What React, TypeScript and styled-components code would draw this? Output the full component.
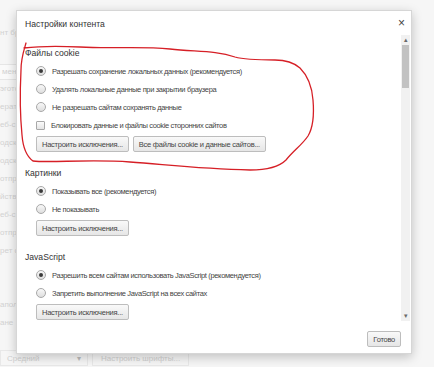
import React from "react";
import styled, { createGlobalStyle } from "styled-components";

const GlobalStyle = createGlobalStyle`
  html, body {
    margin: 0;
    padding: 0;
    width: 434px;
    height: 367px;
    overflow: hidden;
    background: #f6f6f6;
    font-family: "Liberation Sans", Arial, sans-serif;
  }
`;

interface SectionData {
  title: string;
  options: { label: string; kind: "radio" | "check"; checked?: boolean }[];
  buttons: string[];
}

const sections: SectionData[] = [
  {
    title: "Файлы cookie",
    options: [
      { label: "Разрешать сохранение локальных данных (рекомендуется)", kind: "radio", checked: true },
      { label: "Удалять локальные данные при закрытии браузера", kind: "radio" },
      { label: "Не разрешать сайтам сохранять данные", kind: "radio" },
      { label: "Блокировать данные и файлы cookie сторонних сайтов", kind: "check" },
    ],
    buttons: ["Настроить исключения...", "Все файлы cookie и данные сайтов..."],
  },
  {
    title: "Картинки",
    options: [
      { label: "Показывать все (рекомендуется)", kind: "radio", checked: true },
      { label: "Не показывать", kind: "radio" },
    ],
    buttons: ["Настроить исключения..."],
  },
  {
    title: "JavaScript",
    options: [
      { label: "Разрешить всем сайтам использовать JavaScript (рекомендуется)", kind: "radio", checked: true },
      { label: "Запретить выполнение JavaScript на всех сайтах", kind: "radio" },
    ],
    buttons: ["Настроить исключения..."],
  },
];

// фон страницы настроек за диалогом
const backLines = [
  "нт бр",
  "",
  "мента...",
  "эгото",
  "ерати",
  "еб-с",
  "одск",
  "одск",
  "отпр",
  "йств",
  "еб-с",
  "отпр",
  "рет с",
  "",
  "",
  "апол",
  "ане",
];

const App: React.FC = () => {
  return (
    <>
      <GlobalStyle />
      <Page>
        <BackColumn>
          {backLines.map((t, i) => (
            <BackLine key={i} $boxed={i === 2}>
              {t}
            </BackLine>
          ))}
        </BackColumn>
        <BackBottom>
          <BackSelect>
            Средний
            <span>▾</span>
          </BackSelect>
          <BackButton>Настроить шрифты...</BackButton>
        </BackBottom>

        <Dialog>
          <Header>
            <Title>Настройки контента</Title>
            <Close>×</Close>
          </Header>
          <Body>
            <Content>
              {sections.map((s) => (
                <Section key={s.title}>
                  <Heading>{s.title}</Heading>
                  {s.options.map((o) => (
                    <OptionRow key={o.label}>
                      {o.kind === "radio" ? (
                        <Radio $checked={!!o.checked} />
                      ) : (
                        <CheckBox />
                      )}
                      <span>{o.label}</span>
                    </OptionRow>
                  ))}
                  <ButtonRow>
                    {s.buttons.map((b) => (
                      <Button key={b}>{b}</Button>
                    ))}
                  </ButtonRow>
                </Section>
              ))}
            </Content>
            <ScrollBar>
              <Arrow>▴</Arrow>
              <Thumb />
              <Track />
              <Arrow>▾</Arrow>
            </ScrollBar>
          </Body>
          <Footer>
            <Button>Готово</Button>
          </Footer>
        </Dialog>

        <Scribble viewBox="0 0 434 367" width="434" height="367">
          <path
            d="M26 43 C 24 50, 21 58, 21 70 C 20 90, 20 115, 22 135 C 23 148, 26 156, 33 161 C 50 163, 90 159, 130 162 C 170 165, 200 169, 250 170 C 268 170, 280 166, 286 160 C 294 150, 302 145, 308 136 C 314 126, 314 112, 313 100 C 312 86, 308 76, 300 68 C 292 61, 282 60, 275 60 C 258 60, 245 60, 235 57 C 215 50, 195 52, 170 49 C 140 46, 110 49, 80 47 C 60 46, 40 46, 24 48"
            fill="none"
            stroke="#d61f26"
            strokeWidth="1.3"
            strokeLinecap="round"
          />
        </Scribble>
      </Page>
    </>
  );
};

export default App;

const Page = styled.div`
  position: relative;
  width: 434px;
  height: 367px;
  overflow: hidden;
  background: #f6f6f6;
`;

const BackColumn = styled.div`
  display: flex;
  flex-direction: column;
  padding-top: 26px;
  width: 40px;
`;

const BackLine = styled.div<{ $boxed: boolean }>`
  height: 18px;
  line-height: 13px;
  font-size: 8px;
  color: #d2d2d2;
  white-space: nowrap;
  ${(p) =>
    p.$boxed &&
    `
    border: 1px solid #e6e6e6;
    border-left: none;
    background: #fafafa;
    height: 14px;
    margin: 2px 0;
    padding-left: 2px;
  `}
`;

const BackBottom = styled.div`
  position: absolute;
  left: 0;
  top: 350px;
  display: flex;
  gap: 4px;
  font-size: 8px;
  color: #d0d0d0;
`;

const BackSelect = styled.div`
  width: 80px;
  height: 14px;
  padding-left: 6px;
  border: 1px solid #e8e8e8;
  display: flex;
  justify-content: space-between;
  align-items: center;
  span {
    padding-right: 6px;
    color: #bbb;
  }
`;

const BackButton = styled.div`
  height: 14px;
  padding: 0 8px;
  border: 1px solid #e8e8e8;
  display: flex;
  align-items: center;
`;

const Dialog = styled.div`
  position: absolute;
  left: 16px;
  top: 10px;
  width: 396px;
  height: 344px;
  background: #fff;
  border: 1px solid #d6d6d6;
  box-sizing: border-box;
  box-shadow: 0 3px 10px rgba(0, 0, 0, 0.22);
  display: flex;
  flex-direction: column;
`;

const Header = styled.div`
  height: 24px;
  display: flex;
  justify-content: space-between;
  align-items: flex-start;
  padding: 8px 0 0 8px;
  box-sizing: border-box;
`;

const Title = styled.div`
  font-size: 8.6px;
  color: #333;
  line-height: 11px;
`;

const Close = styled.div`
  font-size: 12px;
  line-height: 10px;
  color: #444;
  margin-right: 6px;
  margin-top: -1px;
`;

const Body = styled.div`
  flex: 1;
  display: flex;
  min-height: 0;
`;

const Content = styled.div`
  flex: 1;
  padding: 9px 0 0 8px;
  overflow: hidden;
`;

const Section = styled.div`
  margin-bottom: 12px;
`;

const Heading = styled.div`
  height: 18px;
  line-height: 18px;
  font-size: 8.6px;
  color: #333;
`;

const OptionRow = styled.div`
  height: 18px;
  display: flex;
  align-items: center;
  padding-left: 11px;
  gap: 6px;
  font-size: 7.5px;
  letter-spacing: -0.35px;
  color: #444;
  white-space: nowrap;
`;

const Radio = styled.span<{ $checked: boolean }>`
  width: 8px;
  height: 8px;
  border-radius: 50%;
  border: 1px solid #a8a8a8;
  background: linear-gradient(#f8f8f8, #dedede);
  position: relative;
  flex-shrink: 0;
  &::after {
    content: "";
    display: ${(p) => (p.$checked ? "block" : "none")};
    position: absolute;
    left: 2px;
    top: 2px;
    width: 4px;
    height: 4px;
    border-radius: 50%;
    background: #3a3a3a;
  }
`;

const CheckBox = styled.span`
  width: 7px;
  height: 7px;
  border: 1px solid #a8a8a8;
  border-radius: 1px;
  background: linear-gradient(#fbfbfb, #e4e4e4);
  flex-shrink: 0;
`;

const ButtonRow = styled.div`
  display: flex;
  gap: 4px;
  padding-left: 11px;
  margin-top: 2px;
`;

const Button = styled.div`
  height: 16px;
  box-sizing: border-box;
  padding: 0 5px;
  display: flex;
  align-items: center;
  border: 1px solid #bdbdbd;
  border-radius: 2px;
  background: linear-gradient(#f9f9f9, #e6e6e6);
  font-size: 7.5px;
  letter-spacing: -0.25px;
  color: #444;
  white-space: nowrap;
`;

const ScrollBar = styled.div`
  width: 9px;
  margin-right: 1px;
  background: #f1f1f1;
  display: flex;
  flex-direction: column;
  align-items: center;
`;

const Arrow = styled.div`
  height: 10px;
  font-size: 7px;
  line-height: 10px;
  color: #6a6a6a;
`;

const Thumb = styled.div`
  width: 7px;
  height: 43px;
  background: #c2c2c2;
`;

const Track = styled.div`
  flex: 1;
`;

const Footer = styled.div`
  height: 32px;
  display: flex;
  justify-content: flex-end;
  align-items: flex-start;
  padding: 10px 10px 0 0;
  box-sizing: border-box;
`;

const Scribble = styled.svg`
  position: absolute;
  left: 0;
  top: 0;
  pointer-events: none;
`;
